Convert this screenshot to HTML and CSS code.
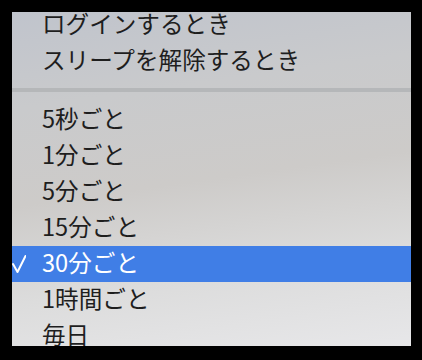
FILE: index.html
```html
<!DOCTYPE html>
<html lang="ja">
<head>
<meta charset="utf-8">
<link rel="stylesheet" href="styles.css">
</head>
<body>
<div class="panel">
  <ul class="menu">
    <li class="item">ログインするとき</li>
    <li class="item">スリープを解除するとき</li>
    <li class="sep"></li>
    <li class="item">5秒ごと</li>
    <li class="item">1分ごと</li>
    <li class="item">5分ごと</li>
    <li class="item">15分ごと</li>
    <li class="item selected"><svg class="check" width="14" height="20" viewBox="0 0 14 20"><polyline points="1,10 5.5,18 13.5,2" fill="none" stroke="#fff" stroke-width="2" stroke-linecap="round" stroke-linejoin="round"/></svg>30分ごと</li>
    <li class="item">1時間ごと</li>
    <li class="item">毎日</li>
  </ul>
</div>
</body>
</html>
```
FILE: styles.css
```css
html, body {
  margin: 0;
  padding: 0;
  background: #000;
}
body {
  width: 422px;
  height: 360px;
  padding: 12px 0 0 12px;
  box-sizing: border-box;
  font-family: "Noto Sans CJK JP", "Noto Sans", sans-serif;
}
.panel {
  width: 399px;
  height: 334px;
  overflow: hidden;
  background: linear-gradient(172deg, #c0c4cc 0%, #c9cacc 25%, #cdcbc9 50%, #dcdcdc 75%, #e7e7e9 100%);
}
.menu {
  list-style: none;
  margin: -5px 0 0 0;
  padding: 0;
}
.item {
  position: relative;
  height: 36px;
  line-height: 32px;
  padding-left: 30px;
  font-size: 23.6px;
  color: #1e1e1e;
  white-space: nowrap;
}
.sep {
  height: 4px;
  background: #b5b7b9;
  margin: 9px 0 10px;
}
.selected {
  background: #407ee6;
  color: #fff;
}
.check {
  position: absolute;
  left: 0;
  top: 8px;
}
```
